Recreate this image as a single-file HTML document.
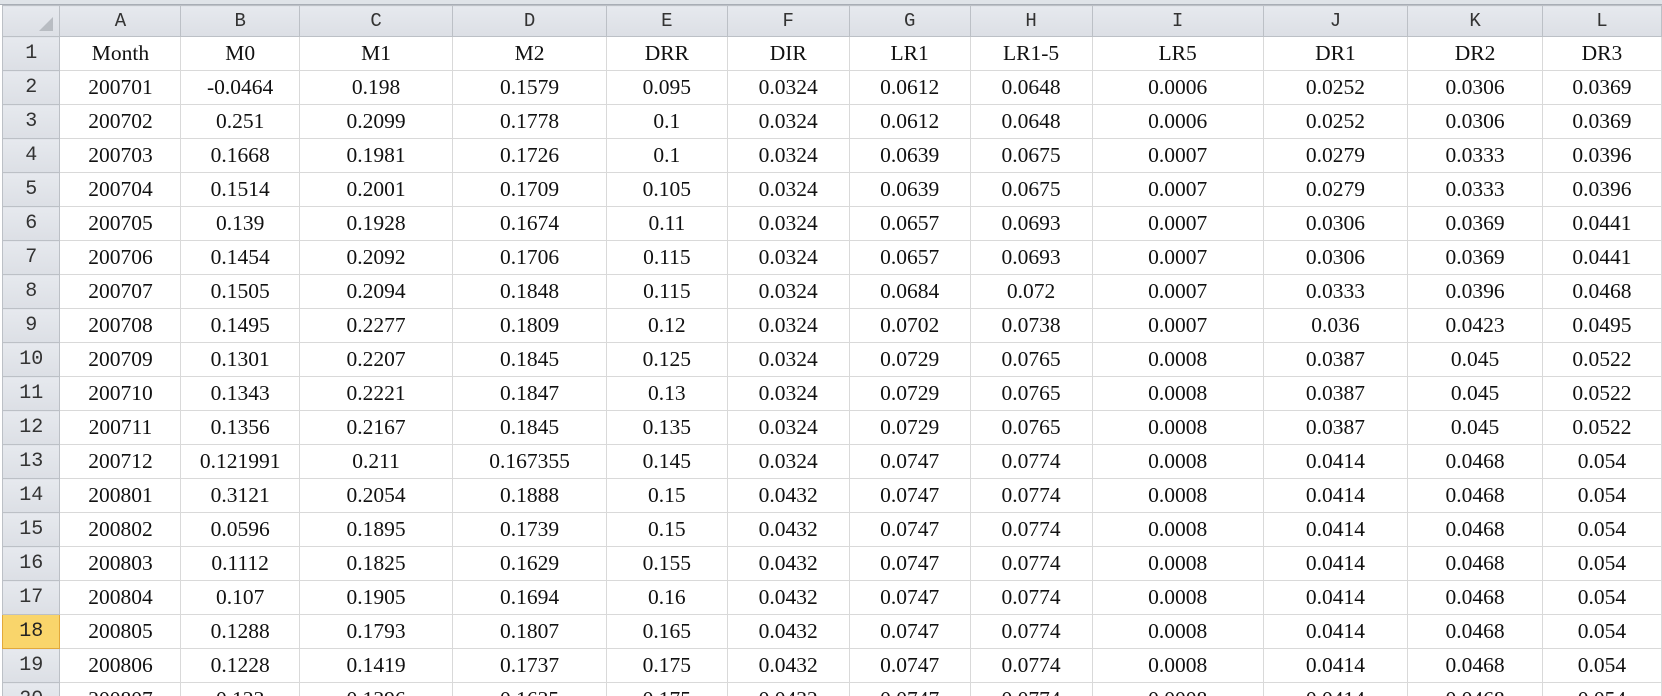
<!DOCTYPE html>
<html><head><style>
html,body{margin:0;padding:0;background:#fff;width:1662px;height:696px;overflow:hidden}
.wrap{position:absolute;left:0;top:0;width:1662px;height:696px;overflow:hidden;background:#fff}
.topbar{position:absolute;left:0;top:0;width:1662px;height:4px;background:#dfe3e8;border-bottom:1px solid #a8adb5}
table{position:absolute;left:2px;top:5px;border-collapse:collapse;table-layout:fixed;font-family:"Liberation Serif",serif;font-size:21.5px;color:#111}
td{border:1px solid #d9d9d9;text-align:center;height:33px;padding:0;white-space:nowrap;overflow:hidden}
tr.h td{height:30px;background:linear-gradient(#e6e9ee,#dcdfe5);border-color:#bcc0c6;font-family:"Liberation Mono",monospace;font-size:19px;color:#333}
td.r{background:linear-gradient(#e6e9ee,#dcdfe5);border-color:#bcc0c6;font-family:"Liberation Mono",monospace;font-size:20px;color:#333}
td.sel{background:#f9d56b;border:1px solid #e2a83a;color:#222}
td.corner{position:relative}
td.corner:after{content:"";position:absolute;right:6px;bottom:5px;border-left:14px solid transparent;border-bottom:14px solid #b8bcc2}
</style></head><body><div class="wrap"><div class="topbar"></div>
<table>
<colgroup><col style="width:58px"><col style="width:122px"><col style="width:119px"><col style="width:155px"><col style="width:155px"><col style="width:122px"><col style="width:123px"><col style="width:122px"><col style="width:123px"><col style="width:173px"><col style="width:146px"><col style="width:136px"><col style="width:120px"></colgroup>
<tr class="h"><td class="corner"></td><td>A</td><td>B</td><td>C</td><td>D</td><td>E</td><td>F</td><td>G</td><td>H</td><td>I</td><td>J</td><td>K</td><td>L</td></tr>
<tr><td class="r">1</td><td>Month</td><td>M0</td><td>M1</td><td>M2</td><td>DRR</td><td>DIR</td><td>LR1</td><td>LR1-5</td><td>LR5</td><td>DR1</td><td>DR2</td><td>DR3</td></tr>
<tr><td class="r">2</td><td>200701</td><td>-0.0464</td><td>0.198</td><td>0.1579</td><td>0.095</td><td>0.0324</td><td>0.0612</td><td>0.0648</td><td>0.0006</td><td>0.0252</td><td>0.0306</td><td>0.0369</td></tr>
<tr><td class="r">3</td><td>200702</td><td>0.251</td><td>0.2099</td><td>0.1778</td><td>0.1</td><td>0.0324</td><td>0.0612</td><td>0.0648</td><td>0.0006</td><td>0.0252</td><td>0.0306</td><td>0.0369</td></tr>
<tr><td class="r">4</td><td>200703</td><td>0.1668</td><td>0.1981</td><td>0.1726</td><td>0.1</td><td>0.0324</td><td>0.0639</td><td>0.0675</td><td>0.0007</td><td>0.0279</td><td>0.0333</td><td>0.0396</td></tr>
<tr><td class="r">5</td><td>200704</td><td>0.1514</td><td>0.2001</td><td>0.1709</td><td>0.105</td><td>0.0324</td><td>0.0639</td><td>0.0675</td><td>0.0007</td><td>0.0279</td><td>0.0333</td><td>0.0396</td></tr>
<tr><td class="r">6</td><td>200705</td><td>0.139</td><td>0.1928</td><td>0.1674</td><td>0.11</td><td>0.0324</td><td>0.0657</td><td>0.0693</td><td>0.0007</td><td>0.0306</td><td>0.0369</td><td>0.0441</td></tr>
<tr><td class="r">7</td><td>200706</td><td>0.1454</td><td>0.2092</td><td>0.1706</td><td>0.115</td><td>0.0324</td><td>0.0657</td><td>0.0693</td><td>0.0007</td><td>0.0306</td><td>0.0369</td><td>0.0441</td></tr>
<tr><td class="r">8</td><td>200707</td><td>0.1505</td><td>0.2094</td><td>0.1848</td><td>0.115</td><td>0.0324</td><td>0.0684</td><td>0.072</td><td>0.0007</td><td>0.0333</td><td>0.0396</td><td>0.0468</td></tr>
<tr><td class="r">9</td><td>200708</td><td>0.1495</td><td>0.2277</td><td>0.1809</td><td>0.12</td><td>0.0324</td><td>0.0702</td><td>0.0738</td><td>0.0007</td><td>0.036</td><td>0.0423</td><td>0.0495</td></tr>
<tr><td class="r">10</td><td>200709</td><td>0.1301</td><td>0.2207</td><td>0.1845</td><td>0.125</td><td>0.0324</td><td>0.0729</td><td>0.0765</td><td>0.0008</td><td>0.0387</td><td>0.045</td><td>0.0522</td></tr>
<tr><td class="r">11</td><td>200710</td><td>0.1343</td><td>0.2221</td><td>0.1847</td><td>0.13</td><td>0.0324</td><td>0.0729</td><td>0.0765</td><td>0.0008</td><td>0.0387</td><td>0.045</td><td>0.0522</td></tr>
<tr><td class="r">12</td><td>200711</td><td>0.1356</td><td>0.2167</td><td>0.1845</td><td>0.135</td><td>0.0324</td><td>0.0729</td><td>0.0765</td><td>0.0008</td><td>0.0387</td><td>0.045</td><td>0.0522</td></tr>
<tr><td class="r">13</td><td>200712</td><td>0.121991</td><td>0.211</td><td>0.167355</td><td>0.145</td><td>0.0324</td><td>0.0747</td><td>0.0774</td><td>0.0008</td><td>0.0414</td><td>0.0468</td><td>0.054</td></tr>
<tr><td class="r">14</td><td>200801</td><td>0.3121</td><td>0.2054</td><td>0.1888</td><td>0.15</td><td>0.0432</td><td>0.0747</td><td>0.0774</td><td>0.0008</td><td>0.0414</td><td>0.0468</td><td>0.054</td></tr>
<tr><td class="r">15</td><td>200802</td><td>0.0596</td><td>0.1895</td><td>0.1739</td><td>0.15</td><td>0.0432</td><td>0.0747</td><td>0.0774</td><td>0.0008</td><td>0.0414</td><td>0.0468</td><td>0.054</td></tr>
<tr><td class="r">16</td><td>200803</td><td>0.1112</td><td>0.1825</td><td>0.1629</td><td>0.155</td><td>0.0432</td><td>0.0747</td><td>0.0774</td><td>0.0008</td><td>0.0414</td><td>0.0468</td><td>0.054</td></tr>
<tr><td class="r">17</td><td>200804</td><td>0.107</td><td>0.1905</td><td>0.1694</td><td>0.16</td><td>0.0432</td><td>0.0747</td><td>0.0774</td><td>0.0008</td><td>0.0414</td><td>0.0468</td><td>0.054</td></tr>
<tr><td class="r sel">18</td><td>200805</td><td>0.1288</td><td>0.1793</td><td>0.1807</td><td>0.165</td><td>0.0432</td><td>0.0747</td><td>0.0774</td><td>0.0008</td><td>0.0414</td><td>0.0468</td><td>0.054</td></tr>
<tr><td class="r">19</td><td>200806</td><td>0.1228</td><td>0.1419</td><td>0.1737</td><td>0.175</td><td>0.0432</td><td>0.0747</td><td>0.0774</td><td>0.0008</td><td>0.0414</td><td>0.0468</td><td>0.054</td></tr>
<tr><td class="r">20</td><td>200807</td><td>0.123</td><td>0.1396</td><td>0.1635</td><td>0.175</td><td>0.0432</td><td>0.0747</td><td>0.0774</td><td>0.0008</td><td>0.0414</td><td>0.0468</td><td>0.054</td></tr>
</table></div></body></html>
